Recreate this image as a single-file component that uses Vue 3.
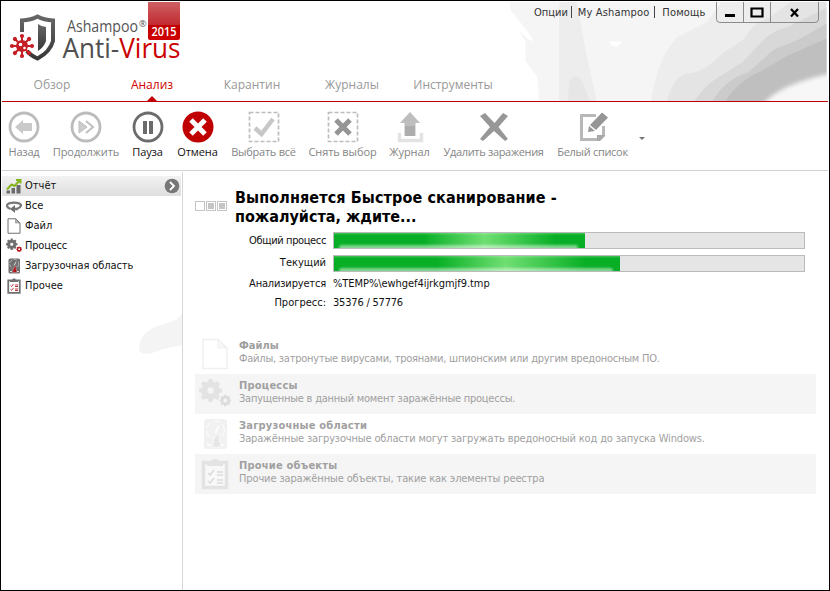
<script setup>
const menu = ['Опции', 'My Ashampoo', 'Помощь']
const tabs = [
  { label: 'Обзор', key: 'home' },
  { label: 'Анализ', key: 'scan', active: true },
  { label: 'Карантин', key: 'quarantine' },
  { label: 'Журналы', key: 'logs' },
  { label: 'Инструменты', key: 'tools' },
]
const tools = [
  { label: 'Назад', icon: 'back' },
  { label: 'Продолжить', icon: 'resume' },
  { label: 'Пауза', icon: 'pause', on: true },
  { label: 'Отмена', icon: 'cancel', on: true },
  { label: 'Выбрать всё', icon: 'all' },
  { label: 'Снять выбор', icon: 'none' },
  { label: 'Журнал', icon: 'log' },
  { label: 'Удалить заражения', icon: 'remove' },
  { label: 'Белый список', icon: 'white' },
]
const side = [
  { label: 'Отчёт', icon: 'report', active: true },
  { label: 'Все', icon: 'everything' },
  { label: 'Файл', icon: 'file' },
  { label: 'Процесс', icon: 'gears' },
  { label: 'Загрузочная область', icon: 'disk' },
  { label: 'Прочее', icon: 'other' },
]
const bars = [
  { label: 'Общий процесс', value: 53.5, key: 'total' },
  { label: 'Текущий', value: 60.8, key: 'current' },
]
const groups = [
  { title: 'Файлы', icon: 'file', text: 'Файлы, затронутые вирусами, троянами, шпионским или другим вредоносным ПО.' },
  { title: 'Процессы', icon: 'gears', text: 'Запущенные в данный момент заражённые процессы.' },
  { title: 'Загрузочные области', icon: 'disk', text: 'Заражённые загрузочные области могут загружать вредоносный код до запуска Windows.' },
  { title: 'Прочие объекты', icon: 'other', text: 'Прочие заражённые объекты, такие как элементы реестра' },
]
const teeth = [0, 45, 90, 135, 180, 225, 270, 315]
</script>

<template>
  <div class="window">
    <header class="header">
      <svg class="swirl" width="328" height="100" viewBox="0 0 328 100">
        <defs><filter id="soft"><feGaussianBlur stdDeviation="2" /></filter></defs>
        <path d="M8 0H328V100H38L36 76L24 59V40L10 18Z" fill="#f5f5f5" />
        <path d="M2 0L9 8L31 36L31 40L27 38L10 22Z" fill="#fff" />
        <path d="M58 0H76L84 45L96 100H58Z" fill="#ededed" />
        <path d="M67 100L68 81Q75 68 82 82L89 100Z" fill="#e6e6e6" />
        <path d="M108 40H121Q115 50 108 40Z" fill="#fff" />
        <path d="M151 100Q158 54 178 35L208 20L222 0H328V100Z" fill="#ededed" />
        <path d="M167 100Q173 76 187 72Q202 73 223 52L245 37Q254 21 270 16L292 0H328V100Z" fill="#e4e4e4" />
        <path d="M195 100Q205 84 219 76L244 60L260 43Q269 31 289 25L328 6V100Z" fill="#d8d8d8" />
        <path d="M213 100Q226 78 249 71L275 48L300 38L328 22V100Z" fill="#cbcbcb" />
        <path d="M226 100Q240 79 262 70L289 54L328 37V100Z" fill="#bfbfbf" />
        <path d="M262 106Q278 83 334 72V106Z" fill="#f7f7f7" filter="url(#soft)" />
      </svg>

      <svg class="logo" width="190" height="66" viewBox="0 0 190 66">
        <defs>
          <linearGradient id="flag" x2="0" y2="1"><stop offset="0" stop-color="#ce6064" /><stop offset=".6" stop-color="#c12b30" /><stop offset=".62" stop-color="#c20000" /><stop offset="1" stop-color="#d00000" /></linearGradient>
          <linearGradient id="steel" x2="0" y2="1"><stop offset="0" stop-color="#666" /><stop offset="1" stop-color="#383838" /></linearGradient>
        </defs>
        <path d="M22 32V20.500Q31 20 37.500 16.500Q44 20 53 20.500V41Q50 52 37.500 58.500Q30 55 27 51" fill="none" stroke="url(#steel)" stroke-width="4" />
        <path d="M38 24Q42 27 46 27V41Q44 47 38 51Z" fill="url(#steel)" />
        <g stroke="#c51e25" stroke-width="2" fill="#c51e25" transform="translate(22 46)">
          <circle r="6" stroke="none" />
          <g v-for="a in teeth" :key="a" :transform="`rotate(${a})`"><path d="M0-5V-10" /><circle cy="-10" r="1.100" /></g>
          <circle cx="-1.500" cy="-1.500" r="1.800" fill="#fff" stroke="none" /><circle cx="2.500" cy="2" r="1.300" fill="#fff" stroke="none" />
        </g>
        <text x="67" y="32" class="brand" textLength="71" lengthAdjust="spacingAndGlyphs">Ashampoo</text>
        <text x="139" y="27" class="reg">®</text>
        <text x="62.500" y="58" class="product" textLength="118" lengthAdjust="spacingAndGlyphs">Anti-<tspan fill="#cb0000">Virus</tspan></text>
        <path d="M148 2H180V38Q180 40 178 40H150Q148 40 148 38Z" fill="url(#flag)" />
        <text x="151.500" y="36" class="year" textLength="25" lengthAdjust="spacingAndGlyphs">2015</text>
      </svg>

      <div class="topline">
        <span v-for="(m, i) in menu" :key="m" :class="['mi', `mi${i}`]">{{ m }}</span>
      </div>
      <svg class="controls" width="104" height="22" viewBox="0 0 104 22">
        <path d="M.5 0V17Q.5 20.500 4 20.500H99Q102.500 20.500 102.500 17V0M27.500 0V20M54.500 0V20" fill="none" stroke="#8b8b8b" />
        <path d="M9 12H19V15H9Z" /><path d="M35.500 6.500H46.500V14.500H35.500Z" fill="none" stroke="#000" stroke-width="2.200" />
        <path d="M75 7L82 14.500M82 7L75 14.500" stroke="#000" stroke-width="2.200" />
      </svg>

      <nav class="tabs">
        <a v-for="t in tabs" :key="t.key" :class="['tab', t.key, { active: t.active }]"><span>{{ t.label }}</span></a>
      </nav>
    </header>

    <section class="toolbar">
      <div v-for="t in tools" :key="t.icon" :class="['tool', `t-${t.icon}`, { on: t.on }]">
        <svg width="32" height="32" viewBox="0 0 32 32">
          <template v-if="t.icon === 'back'">
            <circle cx="16" cy="16" r="14" fill="none" stroke="#bcbcbc" stroke-width="2.800" />
            <path d="M7 16L15 9V12H24V20H15V23Z" fill="#cacaca" />
          </template>
          <template v-else-if="t.icon === 'resume'">
            <circle cx="16" cy="16" r="14" fill="none" stroke="#bcbcbc" stroke-width="2.800" />
            <path d="M9 10L17 16L9 22Z" fill="#ccc" stroke="#bdbdbd" /><path d="M16 10L23 16L16 22" fill="none" stroke="#c2c2c2" stroke-width="2.200" />
          </template>
          <template v-else-if="t.icon === 'pause'">
            <circle cx="16" cy="16" r="14" fill="none" stroke="#6c6c6c" stroke-width="2.800" />
            <path d="M11 10H15V23H11ZM17 10H21V23H17Z" fill="#6b6b6b" />
          </template>
          <template v-else-if="t.icon === 'cancel'">
            <circle cx="16" cy="16" r="15.500" fill="#c00000" />
            <path d="M9 9L23 23M23 9L9 23" stroke="#fff" stroke-width="5" />
          </template>
          <template v-else-if="t.icon === 'all'">
            <rect x="1.500" y="1.500" width="29" height="29" fill="none" stroke="#bdbdbd" stroke-width="1.700" stroke-dasharray="4 2" />
            <path d="M7 17L13.500 23L25 8" fill="none" stroke="#c7c7c7" stroke-width="4.500" />
          </template>
          <template v-else-if="t.icon === 'none'">
            <rect x="1.500" y="1.500" width="29" height="29" fill="none" stroke="#bdbdbd" stroke-width="1.700" stroke-dasharray="4 2" />
            <path d="M9 9L23 23M23 9L9 23" stroke="#959595" stroke-width="5" />
          </template>
          <template v-else-if="t.icon === 'log'">
            <path d="M5.500 22V29.500H27.500V22" fill="none" stroke="#e3e3e3" stroke-width="3.500" />
            <path d="M16 1L26 12H21.500V25H10.500V12H6Z" fill="#bebebe" /><path d="M11 15H21V25H11Z" fill="#adadad" />
          </template>
          <template v-else-if="t.icon === 'remove'">
            <path d="M2 5L7 2L16.500 12L25 2L30 5L20.500 16L30 28L27 30L16 20L5 30L2 28L12 16Z" fill="#979797" />
          </template>
          <template v-else>
            <path d="M19 4.500H4.500V28.500H22L26.500 24V15" fill="none" stroke="#b8b8b8" stroke-width="3" /><path d="M20 30V24H28V25L23 30Z" fill="#a9a9a9" />
            <path d="M13 14L25 1.500L31 6.500L19 19Z" fill="#969696" /><path d="M12 15L18 20L11 21Z" fill="#969696" />
          </template>
        </svg>
        <span>{{ t.label }}</span>
      </div>
      <i class="drop"></i>
    </section>

    <div class="body">
      <aside class="sidebar">
        <div v-for="s in side" :key="s.icon" :class="['side', `s-${s.icon}`, { active: s.active }]">
          <svg class="sico" width="16" height="16" viewBox="0 0 32 32"><use :href="`#i-${s.icon}`" /></svg>
          <span>{{ s.label }}</span>
          <svg v-if="s.active" class="go" width="16" height="16" viewBox="0 0 16 16"><circle cx="8" cy="8" r="7.300" fill="#777" /><path d="M6 4L10 8L6 12" fill="none" stroke="#fff" stroke-width="1.800" /></svg>
        </div>
        <svg class="trace" width="43" height="42" viewBox="0 0 43 42"><path d="M0 34Q1 21 16 14L37 7L44 0V32Q24 35 16 39Q6 43 1 39Z" fill="#f4f4f4" /></svg>
      </aside>

      <main class="main">
        <div class="heading">
          <div class="boxes"><i></i><i class="fill"></i><i class="fill"></i></div>
          <h1><span class="h-a">Выполняется Быстрое сканирование -</span><br><span>пожалуйста, ждите...</span></h1>
        </div>
        <div class="stats">
          <template v-for="b in bars" :key="b.key">
            <label :class="`l-${b.key}`">{{ b.label }}</label>
            <div class="bar"><div class="value" :style="{ width: b.value + '%' }"></div></div>
          </template>
          <label class="l-an">Анализируется</label><span class="path">%TEMP%\ewhgef4ijrkgmjf9.tmp</span>
          <label class="l-pr">Прогресс:</label><span class="count">35376 / 57776</span>
        </div>
        <div class="groups">
          <div v-for="g in groups" :key="g.icon" :class="['group', `g-${g.icon}`]">
            <svg width="32" height="32" viewBox="0 0 32 32"><use :href="`#i-${g.icon}`" /></svg>
            <div><b>{{ g.title }}</b><p>{{ g.text }}</p></div>
          </div>
        </div>
      </main>
    </div>

    <svg width="0" height="0" class="defs">
      <symbol id="i-report" viewBox="0 0 32 32"><path d="M1 25H8V31H1ZM11 20H18V31H11ZM21 14H29V31H21Z" fill="#6b6b6b" /><path d="M2 23L11 13L17 16L28 4M20 4H29V11" fill="none" stroke="#83b51c" stroke-width="4" /></symbol>
      <symbol id="i-everything" viewBox="0 0 32 32"><path d="M9 22Q1 19 2 14Q5 9 16 9Q28 9 30 14Q30 19 23 21" fill="none" stroke="#777" stroke-width="4.500" /><path d="M18 14V30L8 22Z" fill="#6f6f6f" /><path d="M16 22H24" stroke="#777" stroke-width="5" /></symbol>
      <symbol id="i-file" viewBox="0 0 32 32"><path d="M4 1.500H19L28 10V30.500H4Z" fill="#fff" fill-opacity=".7" stroke="currentColor" stroke-width="var(--line)" /><path d="M19 1.500V10H28Z" fill="currentColor" fill-opacity=".5" stroke="currentColor" /></symbol>
      <symbol id="i-gears" viewBox="0 0 32 32">
        <g transform="translate(11.500 12.500)"><circle r="6.200" fill="none" stroke="currentColor" stroke-width="6" /><path v-for="a in teeth" :key="a" d="M-2.500-7L-2-11.500H2L2.500-7Z" fill="currentColor" :transform="`rotate(${a})`" /></g>
        <g transform="translate(26.300 22.500) scale(.47)"><circle r="7" fill="none" stroke="var(--accent)" stroke-width="6" /><path v-for="a in teeth" :key="a" d="M-2.500-7L-2-12H2L2.500-7Z" fill="var(--accent)" :transform="`rotate(${a})`" /></g>
      </symbol>
      <symbol id="i-disk" viewBox="0 0 32 32"><rect x="5" y="1" width="23" height="30" rx="3" fill="currentColor" /><ellipse cx="16.500" cy="12" rx="9" ry="9" fill="none" stroke="#fff" stroke-opacity=".6" stroke-width="1.500" stroke-dasharray="7 3" /><path d="M16 15L20 8M8 27H12M22 27H26" stroke="#fff" stroke-opacity=".75" stroke-width="2" /><path d="M13 29L15 21L20 15L20 22L22 29Z" fill="var(--accent)" stroke="#fff" stroke-opacity=".5" /></symbol>
      <symbol id="i-other" viewBox="0 0 32 32"><path d="M4.500 4.500H27.500V29.500H4.500Z" fill="#fff" fill-opacity=".35" stroke="currentColor" stroke-width="3.500" /><path d="M8 4H12L14 1H18L20 4H24V8H8Z" fill="currentColor" /><path d="M9 15L11 17L15 12M9 23L11 25L15 20M18 14H24M18 17H24M18 22H24M18 25H24" fill="none" stroke="var(--accent)" stroke-width="1.700" /></symbol>
    </svg>
  </div>
</template>

<style>
body { margin: 0; background: #fff; }
</style>

<style scoped>
* { box-sizing: border-box; }
.window { position: relative; width: 830px; height: 591px; border: 1px solid #000; background: #fff; font: 11px/13px "DejaVu Sans Condensed", "DejaVu Sans", sans-serif; color: #111; overflow: hidden; display: flex; flex-direction: column; }
svg { display: block; flex: none; }
.defs { position: absolute; }
.header { position: relative; height: 101px; margin: 0 1px; border-bottom: 1px solid #c00000; flex: none; padding-top: 76px; }
.swirl { position: absolute; right: 0; top: 1px; height: 99px; }
.logo { position: absolute; left: -2px; top: -1px; }
.brand { font: 15.5px "Open Sans", sans-serif; fill: #555; }
.reg { font: 9px "Open Sans", sans-serif; fill: #555; }
.product { font: 28px "Open Sans", sans-serif; fill: #4f4f4f; }
.year { font: 600 12.5px "Open Sans", sans-serif; fill: #fff; }
.topline { position: absolute; top: 5px; left: 532px; display: flex; line-height: 14px; color: #333; }
.mi + .mi { border-left: 1px solid #444; padding-left: 6px; margin-left: 3px; height: 12px; line-height: 14px; letter-spacing: .15px; }
.mi + .mi2 { margin-left: 5px; padding-left: 7px; }
.controls { position: absolute; left: 714px; top: 1px; }
.tabs { display: flex; height: 24px; }
.tab { font: 12px/16px "Open Sans", sans-serif; color: #999; text-align: center; width: 100px; position: relative; }
.tab.tools { width: 102px; }
.tab.active { color: #d00000; }
.tab.active::after { content: ""; position: absolute; left: 45px; bottom: 0; border: solid transparent; border-width: 0 5px 5px; border-bottom-color: #c00000; }
.toolbar { position: relative; height: 69px; margin: 0 1px; border-bottom: 1px solid #d2d2d2; display: flex; flex: none; padding-top: 9px; }
.tool { display: flex; flex-direction: column; align-items: center; font: 11px/14px "Open Sans", sans-serif; color: #858585; white-space: nowrap; }
.tool span { margin-top: 2px; letter-spacing: -.1px; }
.t-remove span { letter-spacing: -.32px; }
.t-white span { letter-spacing: -.3px; }
.t-all span { letter-spacing: -.25px; }
.t-back span { letter-spacing: -.2px; }
.tool.on { color: #111; }
.t-back { width: 44px; } .t-resume { width: 80px; } .t-pause { width: 43px; } .t-cancel { width: 57px; } .t-all { width: 75px; } .t-none { width: 83px; } .t-log { width: 51px; } .t-remove { width: 117px; } .t-white { width: 81px; }
.drop { align-self: flex-start; margin: 26px 0 0 6px; border: solid transparent; border-width: 3px 3px 0; border-top-color: #777; }
.body { flex: 1; display: flex; padding-left: 1px; }
.sidebar { position: relative; width: 181px; margin-top: 1px; border-right: 1px solid #d6d6d6; padding-top: 4px; flex: none; --accent: #b3131b; --line: 2; }
.side { height: 20px; display: flex; align-items: center; padding: 0 0 1px 4px; color: #111; }
.side span { margin-left: 3px; white-space: nowrap; }
.s-disk span { letter-spacing: -.1px; }
.s-gears span { letter-spacing: -.2px; }
.side.active { background: linear-gradient(#f2f2f2, #dedede); margin-right: 1px; }
.go { margin-left: auto; margin-right: 1px; }
.sico { color: #707070; }
.trace { position: absolute; left: 137px; top: 141px; }
.main { flex: 1; padding: 17px 13px 0 12px; }
.heading { display: flex; }
.boxes { display: flex; gap: 1px; margin-top: 13px; width: 40px; }
.boxes i { width: 10px; height: 10px; border: 1px solid #c5c5c5; }
.boxes .fill { background: #c5c5c5; box-shadow: inset 0 0 0 1px #fff; }
h1 { margin: 0; font: bold 16px/19px "DejaVu Sans Condensed", sans-serif; color: #000; white-space: nowrap; }
.h-a { letter-spacing: .11px; }
.stats { display: grid; grid-template-columns: 131px 472px; column-gap: 7px; grid-template-rows: 23px 20px 19px 19px; margin-top: 6px; line-height: 17px; }
.stats label { text-align: right; white-space: nowrap; }
.stats .l-total { letter-spacing: -.37px; }
.stats .l-current { line-height: 15px; }
.stats .l-an { letter-spacing: -.17px; }
.stats .path { letter-spacing: -.06px; }
.stats .count { letter-spacing: -.2px; }
.bar { height: 17px; border: 1px solid #bbb; background: #e5e5e5; }
.value { position: relative; overflow: hidden; height: 15px; background: linear-gradient(rgba(255, 255, 255, .18) 1px, transparent 2px), linear-gradient(90deg, #08af26 36%, #6fdf72 60%, #08af26 88%); }
.value::after { content: ""; position: absolute; left: 5px; right: 7px; bottom: -2px; height: 5px; border-radius: 5px; background: rgba(255, 255, 255, .48); filter: blur(1px); }
.groups { margin-top: 21px; --accent: #dcdcdc; --line: 1.5; }
.group { height: 40px; display: flex; padding: 4px; color: #a0a0a0; }
.group:nth-child(even) { background: #f5f5f5; }
.group svg { color: #e3e3e3; }
.group.g-file svg { color: #f0f0f0; }
.group.g-disk svg { color: #f1f1f1; --accent: #e6e6e6; }
.group div { margin: 1px 0 0 8px; line-height: 13px; white-space: nowrap; }
.group p { margin: 0; letter-spacing: -.23px; }
.g-disk p { letter-spacing: -.16px; }
.g-other p { letter-spacing: -.13px; }
.group b { display: block; letter-spacing: .22px; }
.g-file b { letter-spacing: 0; }
</style>
